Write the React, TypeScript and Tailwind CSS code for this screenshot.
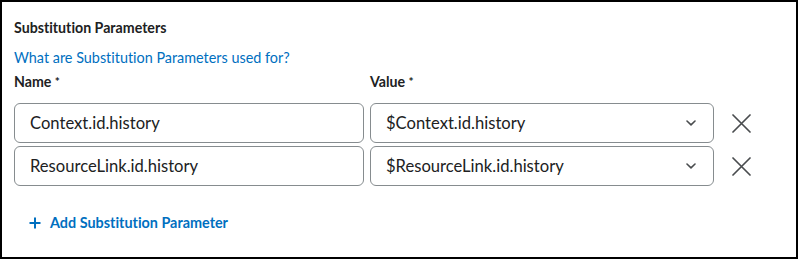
import React from "react";

const rows = [
  { name: "Context.id.history", value: "$Context.id.history" },
  { name: "ResourceLink.id.history", value: "$ResourceLink.id.history" },
];

function Chevron() {
  return (
    <svg width="10" height="6" viewBox="0 0 10 6" fill="none">
      <path d="M1 1l4 3.8L9 1" stroke="#494c4e" strokeWidth="1.6" strokeLinecap="round" strokeLinejoin="round" />
    </svg>
  );
}

function Close() {
  return (
    <svg width="19" height="19" viewBox="0 0 19 19" fill="none">
      <path d="M1 1l17 17M18 1L1 18" stroke="#494c4e" strokeWidth="1.7" strokeLinecap="round" />
    </svg>
  );
}

export default function App() {
  return (
    <div className="w-[798px] h-[259px] border-2 border-black bg-white px-[12px] font-['Lato',sans-serif] text-[#202122] [font-variant-ligatures:none]">
      <h2 className="mt-[16px] text-[14.2px] leading-[20px] font-bold">Substitution Parameters</h2>
      <a className="mt-[10px] block text-[14.4px] leading-[20px] text-[#006fbf]">
        What are Substitution Parameters used for?
      </a>
      <div className="mt-[4px] grid grid-cols-[350px_344px_50px] gap-x-[6px] gap-y-[3px]">
        <div className="text-[14.2px] leading-[20px] font-bold">
          Name <span className="text-[12px] align-top">*</span>
        </div>
        <div className="text-[14.2px] leading-[20px] font-bold">
          Value <span className="text-[12px] align-top">*</span>
        </div>
        <div />
        <div className="col-span-3 h-[5px]" />
        {rows.map((r) => (
          <React.Fragment key={r.name}>
            <div className="h-[40px] rounded-[6px] border border-[#868c8f] px-[15px] flex items-center text-[16.6px]">
              {r.name}
            </div>
            <div className="h-[40px] rounded-[6px] border border-[#868c8f] pl-[15px] pr-[17px] flex items-center justify-between text-[16.6px]">
              <span>{r.value}</span>
              <Chevron />
            </div>
            <div className="flex items-center pl-[12px]">
              <Close />
            </div>
          </React.Fragment>
        ))}
      </div>
      <button className="mt-[27px] ml-[15px] flex items-center gap-[9px] text-[14.4px] leading-[20px] font-bold text-[#006fbf]">
        <svg width="12" height="12" viewBox="0 0 12 12" fill="none">
          <path d="M6 0.5v11M0.5 6h11" stroke="#006fbf" strokeWidth="2" />
        </svg>
        Add Substitution Parameter
      </button>
    </div>
  );
}
